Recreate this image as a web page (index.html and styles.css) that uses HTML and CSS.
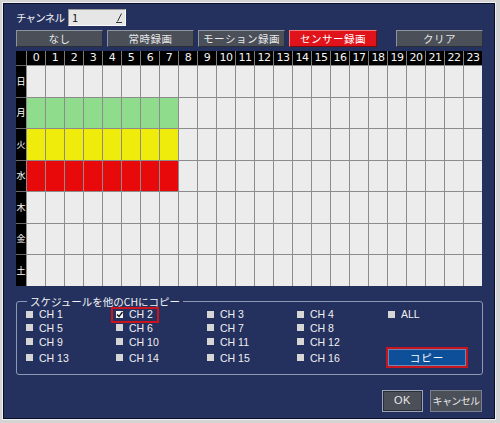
FILE: index.html
```html
<!DOCTYPE html>
<html lang="ja">
<head>
<meta charset="utf-8">
<link rel="stylesheet" href="styles.css">
</head>
<body>
<div class="window">
  <div class="channel-row">
    <span class="label">チャンネル</span>
    <div class="input">
      <span>1</span>
      <svg class="mark" width="8" height="10" viewBox="0 0 8 10"><path d="M6.5 0.5 L2.5 8.5 M1 9.5 H7" stroke="#333" stroke-width="1" fill="none"/></svg>
    </div>
  </div>
  <div class="btn-row">
    <div class="btn">なし</div>
    <div class="btn">常時録画</div>
    <div class="btn">モーション録画</div>
    <div class="btn red">センサー録画</div>
    <div class="btn clear">クリア</div>
  </div>
  <div class="grid" id="grid"></div>
  <fieldset class="copy">
    <legend>スケジュールを他のCHにコピー</legend>
    <div class="ch-grid">
      <div class="ch"><i class="cb"></i>CH 1</div>
      <div class="ch sel"><i class="cb on"><svg width="7" height="7" viewBox="0 0 7 7"><path d="M1 3.5 L3 5.5 L6.5 1" stroke="#111" stroke-width="1.3" fill="none"/></svg></i>CH 2</div>
      <div class="ch"><i class="cb"></i>CH 3</div>
      <div class="ch"><i class="cb"></i>CH 4</div>
      <div class="ch"><i class="cb"></i>ALL</div>
      <div class="ch"><i class="cb"></i>CH 5</div>
      <div class="ch"><i class="cb"></i>CH 6</div>
      <div class="ch"><i class="cb"></i>CH 7</div>
      <div class="ch"><i class="cb"></i>CH 8</div>
      <div class="ch"></div>
      <div class="ch"><i class="cb"></i>CH 9</div>
      <div class="ch"><i class="cb"></i>CH 10</div>
      <div class="ch"><i class="cb"></i>CH 11</div>
      <div class="ch"><i class="cb"></i>CH 12</div>
      <div class="ch"></div>
      <div class="ch"><i class="cb"></i>CH 13</div>
      <div class="ch"><i class="cb"></i>CH 14</div>
      <div class="ch"><i class="cb"></i>CH 15</div>
      <div class="ch"><i class="cb"></i>CH 16</div>
      <div class="copy-wrap"><div class="copy-btn">コピー</div></div>
    </div>
  </fieldset>
  <div class="bottom-row">
    <div class="btn ok">OK</div>
    <div class="btn cancel">キャンセル</div>
  </div>
</div>
<script>
(function(){
  var g = document.getElementById('grid');
  var days = ['日','月','火','水','木','金','土'];
  var fill = {1:'green',2:'yellow',3:'redc'};
  var h = '<div class="hd corner"></div>';
  for (var i=0;i<24;i++) h += '<div class="hd">'+i+'</div>';
  for (var d=0; d<7; d++){
    h += '<div class="day">'+days[d]+'</div>';
    for (var c=0;c<24;c++){
      var cls = 'cell';
      if (fill[d] && c<8) cls += ' '+fill[d];
      h += '<div class="'+cls+'"></div>';
    }
  }
  g.innerHTML = h;
})();
</script>
</body>
</html>
```
FILE: styles.css
```css
html, body {
  margin: 0;
  padding: 0;
}
body {
  width: 500px;
  height: 423px;
  background: #d4d4d4;
  font-family: "Noto Sans CJK JP", "Noto Sans", sans-serif;
  overflow: hidden;
  white-space: nowrap;
}
.window {
  margin: 3px 0 0 3px;
  width: 492px;
  height: 416px;
  box-sizing: border-box;
  border: 1px solid #0a0e26;
  box-shadow: 0 0 0 1px #f0f0f0;
  background: #24315f;
  padding: 5px 12px 0 12px;
  color: #f2f2f2;
}
.channel-row {
  display: flex;
  align-items: center;
  height: 17px;
}
.label {
  font-size: 10.5px;
  letter-spacing: -0.8px;
  line-height: 17px;
  width: 52px;
  flex: none;
  overflow: hidden;
}
.input {
  width: 58px;
  height: 17px;
  box-sizing: border-box;
  background: #e6e6e6;
  border-top: 1px solid #9a9a9a;
  border-left: 1px solid #9a9a9a;
  border-bottom: 1px solid #fafafa;
  border-right: 1px solid #fafafa;
  color: #111;
  font-size: 11px;
  line-height: 15px;
  padding-left: 3px;
  display: flex;
  justify-content: space-between;
  align-items: center;
}
.mark {
  margin-right: 2px;
}
.btn-row {
  display: flex;
  gap: 4px;
  margin-top: 4px;
  height: 17px;
}
.btn {
  width: 87px;
  height: 17px;
  box-sizing: border-box;
  background: #4a4f58;
  border-top: 1px solid #8c93a0;
  border-left: 1px solid #8c93a0;
  border-right: 1px solid #2a2e36;
  border-bottom: 1px solid #2a2e36;
  color: #e8e8e8;
  font-size: 10.5px;
  line-height: 15px;
  text-align: center;
  letter-spacing: 0.5px;
  flex: none;
}
.btn.red {
  width: 88px;
  background: #e1131a;
  border-color: #f07a7a #7a0a0a #7a0a0a #f07a7a;
  color: #fff;
}
.btn.clear {
  margin-left: auto;
  margin-right: -1px;
}
.grid {
  margin-top: 4px;
  display: grid;
  grid-template-columns: 10px repeat(24, 19px);
  grid-template-rows: 14px repeat(7, 31.5px);
  background: #ececec;
  width: 466px;
}
.hd {
  background: #000;
  color: #f4f4f4;
  font-family: "DejaVu Sans", sans-serif;
  font-size: 11px;
  line-height: 14px;
  text-align: center;
  border-left: 1px solid #7a7a7a;
  box-sizing: border-box;
  letter-spacing: -0.5px;
}
.hd.corner {
  border-left: none;
}
.day {
  background: #000;
  color: #fff;
  font-size: 9px;
  display: flex;
  align-items: center;
  justify-content: center;
  border-top: 1px solid #6a6a6a;
  box-sizing: border-box;
}
.cell {
  border-left: 1px solid #8c8c8c;
  border-top: 1px solid #8c8c8c;
  box-sizing: border-box;
  background: #ececec;
}
.cell.green { background: #8fdd8c; }
.cell.yellow { background: #efeb0b; }
.cell.redc { background: #e8090b; }
.copy {
  margin: 10px -1px 0 0;
  padding: 0 0 0 9px;
  border: 1px solid #8e97b4;
  border-radius: 3px;
  height: 79px;
  box-sizing: border-box;
}
.copy legend {
  font-size: 10.5px;
  padding: 0 3px;
  margin-left: 1px;
  line-height: 12px;
  color: #f2f2f2;
}
.ch-grid {
  display: grid;
  grid-template-columns: 90px 91px 90px 91px 80px;
  grid-template-rows: 13.5px 13.5px 14px 18px;
  margin-top: 0;
}
.ch {
  display: flex;
  align-items: center;
  font-family: "Liberation Sans", sans-serif;
  font-size: 10.5px;
  color: #f0f0f0;
  position: relative;
}
.cb {
  width: 7px;
  height: 7px;
  background: #d6d6d6;
  margin-right: 6px;
  display: flex;
  align-items: center;
  justify-content: center;
}
.cb.on {
  background: #f4f4f4;
}
.ch.sel::after {
  content: "";
  position: absolute;
  left: -5px;
  top: -1px;
  width: 48px;
  height: 16px;
  border: 2px solid #c8141e;
  box-sizing: border-box;
}
.copy-wrap {
  display: flex;
  align-items: center;
  margin-left: -2px;
}
.copy-btn {
  width: 91px;
  height: 21px;
  box-sizing: border-box;
  border: 2px solid #c41520;
  background: #0d4f98;
  box-shadow: inset 0 0 0 1px #6f86b0;
  color: #fff;
  font-size: 10.5px;
  line-height: 17px;
  text-align: center;
  letter-spacing: 1px;
}
.bottom-row {
  display: flex;
  justify-content: flex-end;
  gap: 7px;
  margin-top: 15px;
}
.btn.ok {
  width: 41px;
  height: 22px;
  line-height: 18px;
  font-family: "Liberation Sans", sans-serif;
  font-size: 11px;
  border: 1px solid #9aa3b8;
  box-shadow: inset 0 0 0 1px #2a2e36;
}
.btn.cancel {
  width: 52px;
  height: 22px;
  line-height: 20px;
  font-size: 10px;
  letter-spacing: -0.6px;
  border: 1px solid #7a8090;
  padding: 0;
}
```
